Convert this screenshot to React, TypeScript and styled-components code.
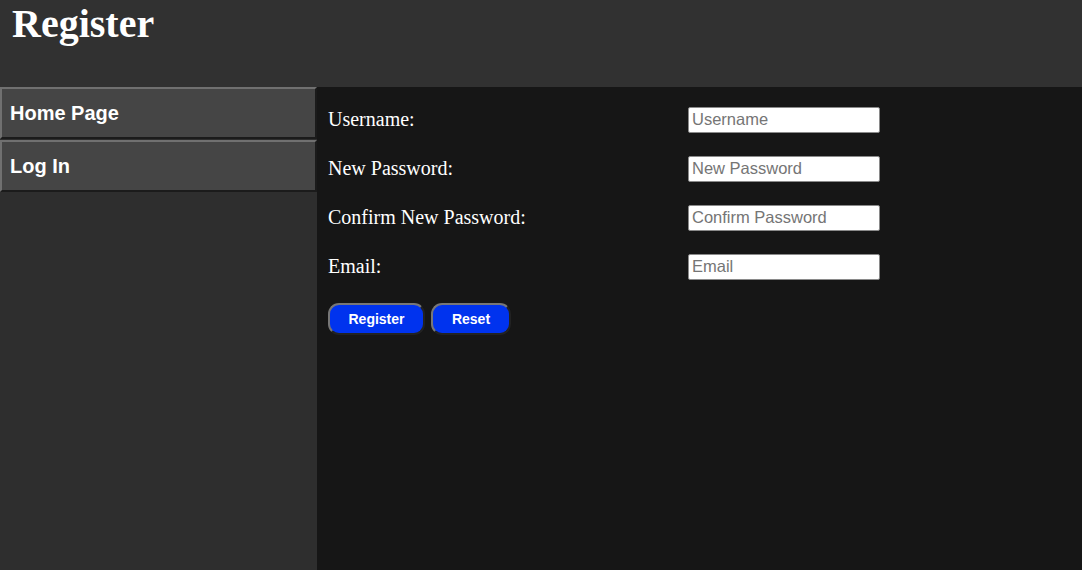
import React from 'react';
import styled, { createGlobalStyle } from 'styled-components';

const GlobalStyle = createGlobalStyle`
  html, body {
    margin: 0;
    padding: 0;
    background: #161616;
  }
  * { box-sizing: border-box; }
`;

const Page = styled.div`
  width: 1082px;
  height: 570px;
  display: flex;
  flex-direction: column;
  overflow: hidden;
`;

const Header = styled.header`
  height: 87px;
  background: #313131;
  padding: 4px 12px 0;
`;

const Title = styled.h1`
  margin: 0;
  font-family: 'Liberation Serif', 'Times New Roman', serif;
  font-weight: bold;
  font-size: 40px;
  line-height: 40px;
  color: #ffffff;
`;

const Body = styled.div`
  flex: 1;
  display: flex;
`;

const Sidebar = styled.nav`
  width: 317px;
  background: #2e2e2e;
  display: flex;
  flex-direction: column;
  gap: 1px;
`;

const NavItem = styled.a`
  display: flex;
  align-items: center;
  height: 52px;
  padding: 0 8px;
  background: #454545;
  border: 2px outset #707070;
  font-family: 'Liberation Sans', Arial, sans-serif;
  font-weight: bold;
  font-size: 20px;
  color: #ffffff;
  text-decoration: none;
  cursor: pointer;
`;

const Main = styled.main`
  flex: 1;
  background: #161616;
  padding: 8px 11px;
`;

const Form = styled.form`
  display: flex;
  flex-direction: column;
`;

const Row = styled.div`
  display: grid;
  grid-template-columns: 360px 192px;
  align-items: center;
  height: 49px;
`;

const Label = styled.label`
  font-family: 'Liberation Serif', 'Times New Roman', serif;
  font-size: 20px;
  color: #ffffff;
`;

const Input = styled.input`
  width: 192px;
  height: 26px;
  padding: 0 3px;
  border: 1px solid #8a8a8a;
  border-radius: 2px;
  background: #ffffff;
  font-family: 'Liberation Sans', Arial, sans-serif;
  font-size: 16.5px;
  color: #222;
  &::placeholder { color: #757575; }
`;

const Buttons = styled.div`
  display: flex;
  gap: 6px;
  margin-top: 12px;
`;

const Button = styled.button<{ $w: number }>`
  width: ${p => p.$w}px;
  height: 32px;
  background: #0033ee;
  border: 2px outset #777777;
  border-radius: 11px;
  font-family: 'Liberation Sans', Arial, sans-serif;
  font-weight: bold;
  font-size: 14px;
  color: #ffffff;
  cursor: pointer;
`;

const fields = [
  { id: 'username', label: 'Username:', placeholder: 'Username', type: 'text' },
  { id: 'password', label: 'New Password:', placeholder: 'New Password', type: 'password' },
  { id: 'confirm', label: 'Confirm New Password:', placeholder: 'Confirm Password', type: 'password' },
  { id: 'email', label: 'Email:', placeholder: 'Email', type: 'email' },
];

export default function App() {
  return (
    <>
      <GlobalStyle />
      <Page>
        <Header>
          <Title>Register</Title>
        </Header>
        <Body>
          <Sidebar>
            <NavItem>Home Page</NavItem>
            <NavItem>Log In</NavItem>
          </Sidebar>
          <Main>
            <Form onSubmit={e => e.preventDefault()}>
              {fields.map(f => (
                <Row key={f.id}>
                  <Label htmlFor={f.id}>{f.label}</Label>
                  <Input id={f.id} type={f.type} placeholder={f.placeholder} />
                </Row>
              ))}
              <Buttons>
                <Button $w={97} type="submit">Register</Button>
                <Button $w={80} type="reset">Reset</Button>
              </Buttons>
            </Form>
          </Main>
        </Body>
      </Page>
    </>
  );
}
